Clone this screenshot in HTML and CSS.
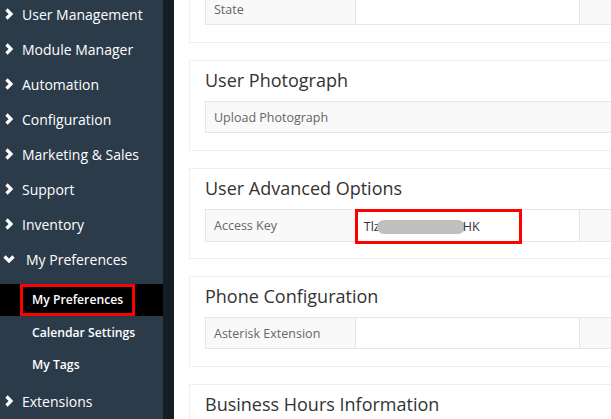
FILE: index.html
```html
<!DOCTYPE html>
<html>
<head>
<meta charset="utf-8">
<link rel="stylesheet" href="styles.css">
</head>
<body>
<div class="app">
  <nav class="sidebar">
    <ul class="menu">
      <li class="item"><svg class="chev" viewBox="0 0 10 12"><polyline points="2.5,1.5 7,6 2.5,10.5"/></svg><span>User Management</span></li>
      <li class="item"><svg class="chev" viewBox="0 0 10 12"><polyline points="2.5,1.5 7,6 2.5,10.5"/></svg><span>Module Manager</span></li>
      <li class="item"><svg class="chev" viewBox="0 0 10 12"><polyline points="2.5,1.5 7,6 2.5,10.5"/></svg><span>Automation</span></li>
      <li class="item"><svg class="chev" viewBox="0 0 10 12"><polyline points="2.5,1.5 7,6 2.5,10.5"/></svg><span>Configuration</span></li>
      <li class="item"><svg class="chev" viewBox="0 0 10 12"><polyline points="2.5,1.5 7,6 2.5,10.5"/></svg><span>Marketing &amp; Sales</span></li>
      <li class="item"><svg class="chev" viewBox="0 0 10 12"><polyline points="2.5,1.5 7,6 2.5,10.5"/></svg><span>Support</span></li>
      <li class="item"><svg class="chev" viewBox="0 0 10 12"><polyline points="2.5,1.5 7,6 2.5,10.5"/></svg><span>Inventory</span></li>
      <li class="item open"><svg class="chev down" viewBox="0 0 12 10"><polyline points="1.5,2.5 6,7 10.5,2.5"/></svg><span>My Preferences</span></li>
      <li class="sub">
        <div class="subitem active"><span class="redbox">My Preferences</span></div>
        <div class="subitem"><span>Calendar Settings</span></div>
        <div class="subitem"><span>My Tags</span></div>
      </li>
      <li class="item"><svg class="chev" viewBox="0 0 10 12"><polyline points="2.5,1.5 7,6 2.5,10.5"/></svg><span>Extensions</span></li>
    </ul>
  </nav>
  <div class="strip"></div>
  <main class="main">
    <div class="scroller">
      <section class="panel">
        <h2 class="title">Address Information</h2>
        <table class="grid">
          <tr><td class="lbl">State</td><td class="val"></td><td class="lbl"></td><td class="val"></td></tr>
        </table>
      </section>
      <section class="panel">
        <h2 class="title">User Photograph</h2>
        <table class="grid">
          <tr><td class="lbl wide">Upload Photograph</td><td class="val"></td></tr>
        </table>
      </section>
      <section class="panel">
        <h2 class="title">User Advanced Options</h2>
        <table class="grid">
          <tr><td class="lbl">Access Key</td><td class="val key"><span class="keybox"><span class="ktxt">Tlz</span><span class="blur"></span><span class="ktxt">HK</span></span></td><td class="lbl"></td><td class="val"></td></tr>
        </table>
      </section>
      <section class="panel">
        <h2 class="title">Phone Configuration</h2>
        <table class="grid">
          <tr><td class="lbl">Asterisk Extension</td><td class="val"></td><td class="lbl"></td><td class="val"></td></tr>
        </table>
      </section>
      <section class="panel">
        <h2 class="title">Business Hours Information</h2>
        <table class="grid">
          <tr><td class="lbl">Business Hours</td><td class="val"></td><td class="lbl"></td><td class="val"></td></tr>
        </table>
      </section>
    </div>
  </main>
</div>
</body>
</html>
```

FILE: styles.css
```css
html, body {
  margin: 0;
  padding: 0;
  width: 611px;
  height: 419px;
  overflow: hidden;
  background: #fff;
  font-family: "Open Sans", "Liberation Sans", sans-serif;
}
.app {
  display: flex;
  height: 419px;
  overflow: hidden;
}
.sidebar {
  width: 163px;
  flex: none;
  background: #2c3b4a;
  overflow: hidden;
}
.strip {
  width: 11px;
  flex: none;
  background: #151d25;
}
.menu {
  list-style: none;
  margin: -3.5px 0 0 0;
  padding: 0;
}
.item {
  height: 35px;
  display: flex;
  align-items: center;
  color: #fff;
  font-size: 14px;
  padding-left: 4px;
  white-space: nowrap;
}
.chev {
  width: 10px;
  height: 12px;
  margin-right: 8px;
  fill: none;
  stroke: #fff;
  stroke-width: 3.2;
  stroke-linecap: butt;
}
.chev.down {
  width: 12px;
  height: 10px;
  margin-left: -1px;
  margin-right: 11px;
}
.sub {
  padding: 7px 0 2.5px 0;
  margin-right: -11px;
}
.subitem {
  height: 32.5px;
  display: flex;
  align-items: center;
  padding-left: 32px;
  color: #fff;
  font-size: 12.2px;
  font-weight: 600;
  white-space: nowrap;
}
.subitem.active {
  background: #000;
  width: 174px;
  box-sizing: border-box;
  position: relative;
  z-index: 2;
}
.redbox {
  display: flex;
  align-items: center;
  height: 32.5px;
  box-sizing: border-box;
  margin-left: -12px;
  padding-left: 9px;
  width: 115px;
  border: 3px solid #ff0000;
}
.main {
  flex: 1;
  overflow: hidden;
  padding-left: 15px;
}
.scroller {
  margin-top: -48px;
  width: 800px;
}
.panel {
  box-sizing: border-box;
  height: 91px;
  margin-bottom: 17px;
  border: 1px solid #efefef;
  padding: 7px 15px 0 15px;
  background: #fff;
}
.title {
  margin: 0;
  height: 24px;
  line-height: 24px;
  font-size: 18px;
  font-weight: 400;
  color: #333;
  margin-bottom: 9px;
}
.grid {
  border-collapse: collapse;
  width: 748px;
}
.grid td {
  border: 1px solid #e6e6e6;
  height: 31px;
  padding: 0 0 0 8px;
  box-sizing: border-box;
  font-size: 12.5px;
  color: #666;
  vertical-align: middle;
}
.grid td.lbl {
  width: 150px;
  background: #f9f9f9;
}
.grid td.lbl.wide {
  width: 298px;
}
.grid td.val {
  width: 224px;
  background: #fff;
}
.grid td.key {
  padding: 0;
  position: relative;
}
.keybox {
  display: flex;
  align-items: center;
  box-sizing: border-box;
  width: 167px;
  height: 35px;
  margin-top: -1px;
  margin-bottom: -3px;
  margin-left: -1px;
  border: 3px solid #ff0000;
  padding-left: 6px;
  color: #333;
  font-size: 12.5px;
}
.blur {
  display: inline-block;
  width: 88px;
  height: 14px;
  border-radius: 7px;
  background: #c0c0c0;
  margin-left: -3px;
  margin-right: -2px;
}
```
